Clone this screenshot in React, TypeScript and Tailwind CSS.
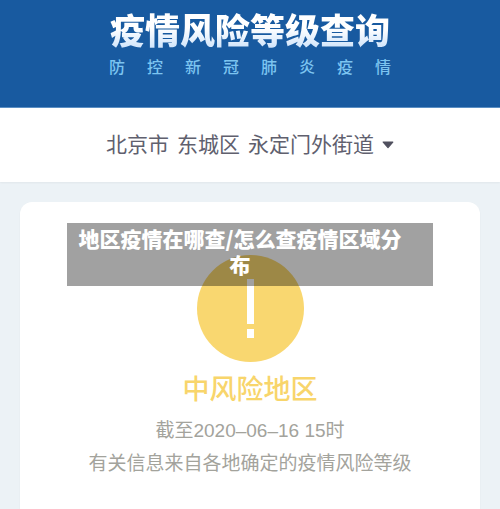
import React from 'react';

const place = ['北京市', '东城区', '永定门外街道'];

const Header: React.FC = () => (
  <header className="flex flex-col items-center border-b border-[#5b8fc4] bg-[#185aa0] pt-[13px] pb-[27px]">
    <h1 className="bg-gradient-to-b from-white from-40% to-[#c9e0fa] bg-clip-text text-[35px] leading-[38px] font-black whitespace-nowrap text-transparent">
      疫情风险等级查询
    </h1>
    <p className="mt-[5px] w-[282px] text-base leading-6 font-medium text-[#7cc4f0] [text-align-last:justify]">
      防 控 新 冠 肺 炎 疫 情
    </p>
  </header>
);

const PlacePicker: React.FC = () => (
  <button
    type="button"
    className="flex w-full items-center justify-center gap-2 bg-white py-[22px] text-[21px] leading-[30px] text-[#60606e] shadow-xs"
  >
    {place.map(name => (
      <span key={name}>{name}</span>
    ))}
    <svg className="h-2 w-3" viewBox="0 0 12 8" aria-hidden="true">
      <path d="M1.2 1h9.6L6 6.6z" fill="#50505f" stroke="#50505f" strokeWidth="1.2" strokeLinejoin="round" />
    </svg>
  </button>
);

const RiskCard: React.FC = () => (
  <section className="relative flex flex-1 flex-col items-center rounded-t-xl bg-white px-2 pt-[53px] pb-6 text-center shadow-xs">
    <svg className="h-[107px] w-[107px]" viewBox="0 0 107 107" role="img" aria-label="中风险">
      <circle cx="53.5" cy="53.5" r="53.5" fill="#f9d770" />
      <path d="M50 24h7v45h-7zM50 74h7v9h-7z" fill="#fff" />
    </svg>
    <h2 className="mt-[10px] text-[27px] leading-9 font-medium text-[#f8d56b]">中风险地区</h2>
    <p className="mt-[6px] text-[19px] leading-[33px] text-[#a3a39c]">
      截至2020–06–16 15时
      <br />
      有关信息来自各地确定的疫情风险等级
    </p>

    {/* caption laid over the card */}
    <div className="absolute inset-x-[47px] top-[21px] bg-black/37 pt-[2px] pr-7 pb-[9px] pl-2 font-['Noto_Sans_CJK_SC',sans-serif] text-[21px] leading-[26px] font-black text-white">
      地区疫情在哪查/怎么查疫情区域分布
    </div>
  </section>
);

const App: React.FC = () => {
  return (
    <div className="flex min-h-screen flex-col bg-[#ecf2f6] font-['Liberation_Sans','Noto_Sans_CJK_SC',sans-serif]">
      <Header />
      <PlacePicker />
      <main className="flex flex-1 flex-col px-5 pt-5">
        <RiskCard />
      </main>
    </div>
  );
};

export default App;
